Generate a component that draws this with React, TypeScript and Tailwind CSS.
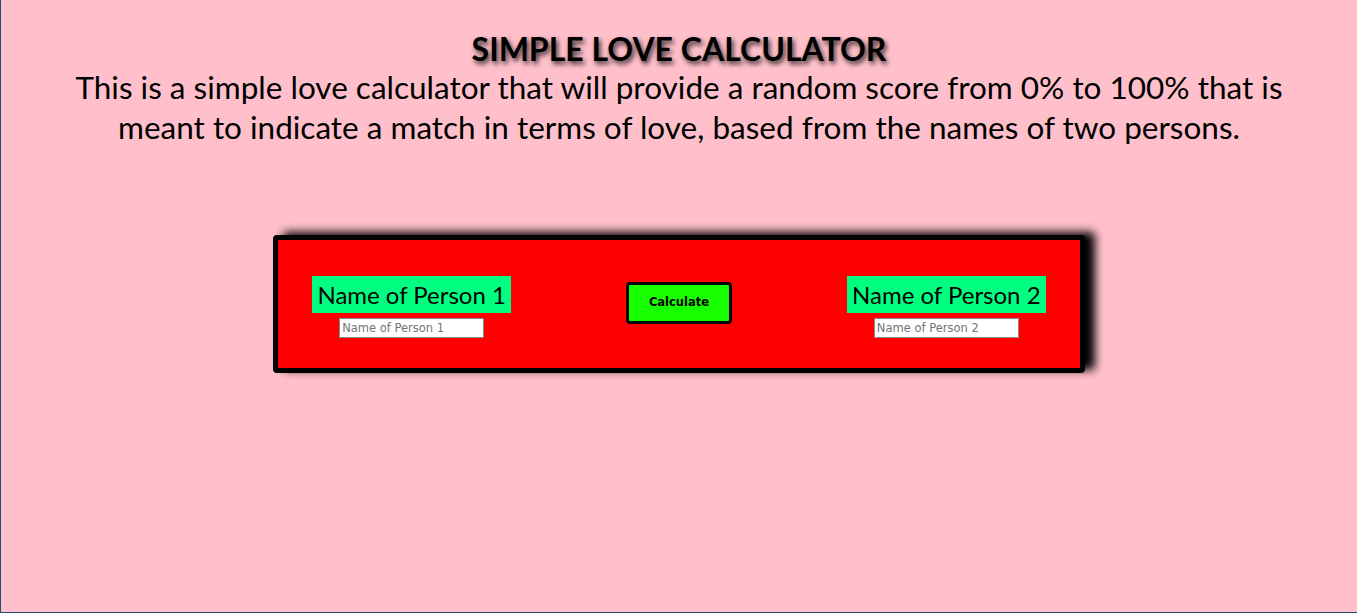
export default function App() {
  return (
    <div
      className="min-h-screen w-full bg-[#ffc0cb] border-l border-b border-[#1d4e6e] flex flex-col items-center"
      style={{ fontFamily: "Lato, 'Noto Sans', sans-serif" }}
    >
      <h1
        className="mt-[33px] text-[32px] font-bold leading-[32px] text-black"
        style={{ textShadow: "2px 3px 5px rgba(0,0,0,0.8)" }}
      >
        SIMPLE LOVE CALCULATOR
      </h1>
      <p className="text-[31.5px] leading-[40px] text-center text-black px-[60px] mt-[2px]">
        This is a simple love calculator that will provide a random score from 0% to 100% that is
        meant to indicate a match in terms of love, based from the names of two persons.
      </p>
      <div
        className="mt-[88px] w-[812px] h-[138px] bg-[#ff0000] border-[5px] border-black rounded-[4px] grid grid-cols-3 items-start pt-[36px]"
        style={{ boxShadow: "10px -3px 10px #000" }}
      >
        <div className="flex flex-col items-center">
          <div className="bg-[#00ff80] px-[5px] h-[37px] flex items-center text-[24px] text-black">
            Name of Person 1
          </div>
          <input
            className="mt-[5px] w-[145px] h-[20px] bg-white border border-[#8a8a8a] px-[2px] text-[11.5px] placeholder:text-[#757575]"
            style={{ fontFamily: "'DejaVu Sans', sans-serif" }}
            placeholder="Name of Person 1"
          />
        </div>
        <div className="flex justify-center pt-[6px]">
          <button
            className="w-[106px] h-[42px] bg-[#18ff00] border-[3px] border-black rounded-[4px] text-[11.5px] font-bold text-black"
            style={{ fontFamily: "'DejaVu Sans', sans-serif" }}
          >
            Calculate
          </button>
        </div>
        <div className="flex flex-col items-center">
          <div className="bg-[#00ff80] px-[5px] h-[37px] flex items-center text-[24px] text-black">
            Name of Person 2
          </div>
          <input
            className="mt-[5px] w-[145px] h-[20px] bg-white border border-[#8a8a8a] px-[2px] text-[11.5px] placeholder:text-[#757575]"
            style={{ fontFamily: "'DejaVu Sans', sans-serif" }}
            placeholder="Name of Person 2"
          />
        </div>
      </div>
    </div>
  );
}
